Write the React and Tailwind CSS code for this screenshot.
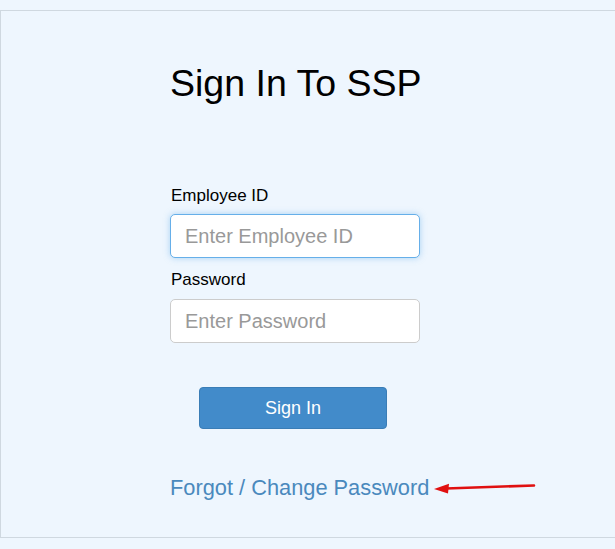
export default function App() {
  return (
    <div className="w-[615px] h-[549px] bg-[#eef6fe] pt-[10px] overflow-hidden" style={{ fontFamily: '"Liberation Sans", Arial, sans-serif' }}>
      <div className="h-[528px] border-t border-b border-l border-[#cfd8e0] pl-[169px]">
        <h1 className="mt-[52px] text-[37.5px] leading-[40px] text-black">Sign In To SSP</h1>
        <div className="mt-[83px] text-[17px] leading-[20px] text-black pl-[1px]">Employee ID</div>
        <div className="mt-[8px] w-[250px] h-[44px] bg-white border border-[#66afe9] rounded-[5px] shadow-[0_0_6px_rgba(102,175,233,0.5)] flex items-center pl-[14px] text-[20px] text-[#999]">
          Enter Employee ID
        </div>
        <div className="mt-[12px] text-[17px] leading-[20px] text-black pl-[1px]">Password</div>
        <div className="mt-[9px] w-[250px] h-[44px] bg-white border border-[#cccccc] rounded-[5px] flex items-center pl-[14px] text-[20px] text-[#999]">
          Enter Password
        </div>
        <div className="mt-[44px] ml-[29px] w-[188px] h-[42px] bg-[#428bca] border border-[#3a7db6] rounded-[4px] flex items-center justify-center text-white text-[18px]">
          Sign In
        </div>
        <div className="mt-[47px] flex items-center">
          <span className="text-[21.8px] leading-[24px] text-[#4a89bd]">Forgot / Change Password</span>
          <svg width="110" height="14" viewBox="0 0 110 14" className="ml-[3px]">
            <path d="M14 7.5 L102 4.5" stroke="#e01010" strokeWidth="2.6" strokeLinecap="round" fill="none" />
            <path d="M2 7.9 L17 2.8 L16 12.6 Z" fill="#e01010" />
          </svg>
        </div>
      </div>
    </div>
  );
}
